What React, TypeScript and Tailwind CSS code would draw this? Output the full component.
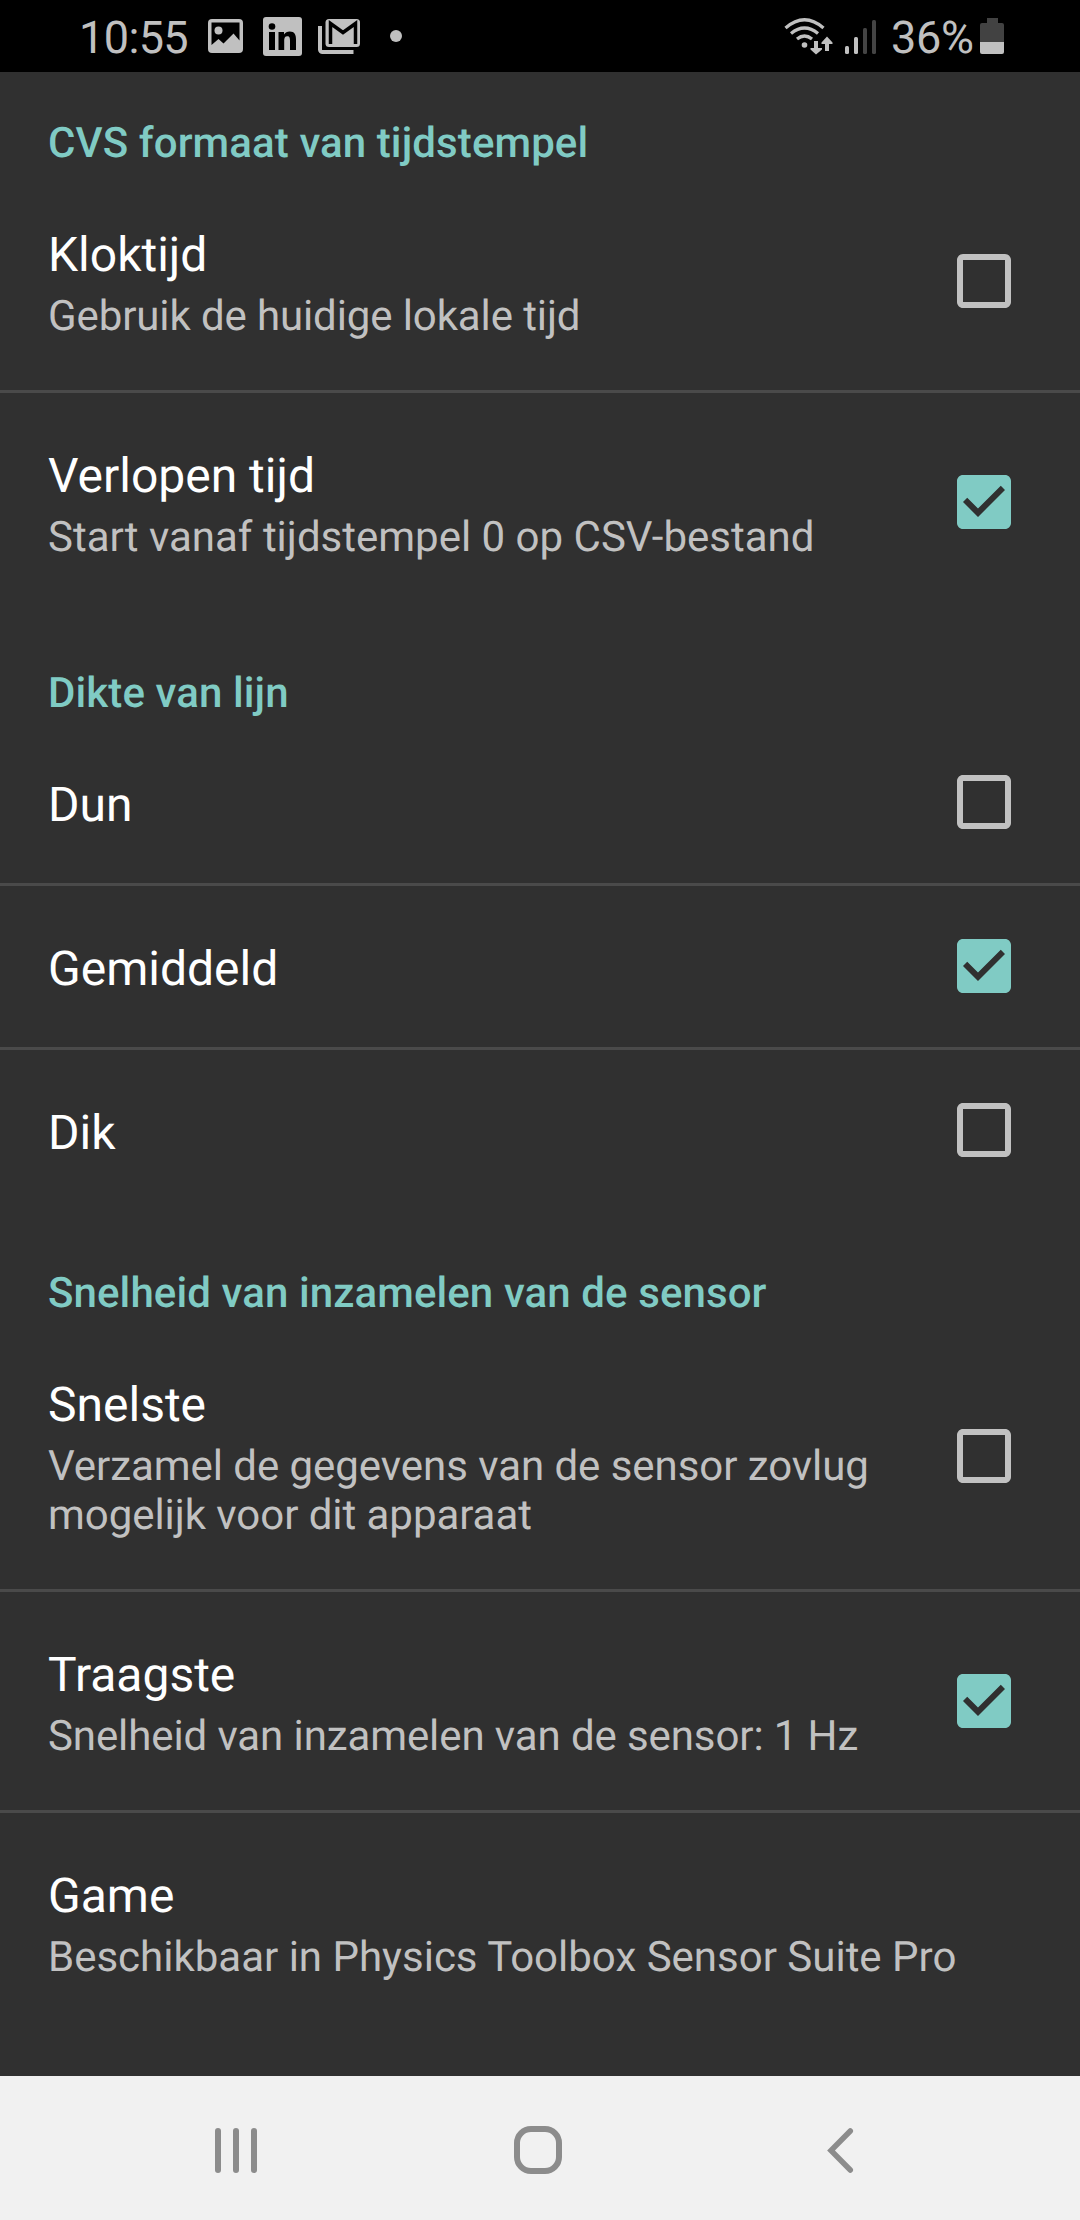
import React from "react";

function CheckBox({ checked }: { checked: boolean }) {
  return (
    <svg viewBox="0 0 24 24" className={checked ? "size-[72px] shrink-0 text-[#80cbc4]" : "size-[72px] shrink-0 text-[#c1c1c1]"} fill="currentColor">
      {checked ? (
        <path d="M19 3H5c-1.11 0-2 .9-2 2v14c0 1.1.89 2 2 2h14c1.11 0 2-.9 2-2V5c0-1.1-.89-2-2-2zm-9 14l-5-5 1.41-1.41L10 14.17l7.59-7.59L19 8l-9 9z" />
      ) : (
        <path d="M19 5v14H5V5h14m0-2H5c-1.1 0-2 .9-2 2v14c0 1.1.9 2 2 2h14c1.1 0 2-.9 2-2V5c0-1.1-.9-2-2-2z" />
      )}
    </svg>
  );
}

type Item = { title: string; summary?: string; checked?: boolean; tracking?: string };

function Row({ item, divider }: { item: Item; divider: boolean }) {
  return (
    <>
      <div
        className={
          item.summary
            ? "flex items-center justify-between pl-12 pr-[60px]"
            : "flex h-[161px] items-center justify-between pl-12 pr-[60px] pb-px"
        }
      >
        <div className={item.summary ? "flex min-w-0 flex-col gap-[9px] pt-[55px] pb-[49px]" : "pt-[6px]"}>
          <div className="text-[48px] leading-[56px] text-white">{item.title}</div>
          {item.summary && (
            <div className={`whitespace-pre-line text-[42px] leading-[49px] text-[#c1c1c1] ${item.tracking ?? ""}`}>
              {item.summary}
            </div>
          )}
        </div>
        {item.checked !== undefined && <CheckBox checked={item.checked} />}
      </div>
      {divider && <div className="h-[3px] bg-[#4a4a4a]" />}
    </>
  );
}

const sections: { heading: string; items: Item[] }[] = [
  {
    heading: "CVS formaat van tijdstempel",
    items: [
      { title: "Kloktijd", summary: "Gebruik de huidige lokale tijd", checked: false, tracking: "tracking-[-0.11px]" },
      { title: "Verlopen tijd", summary: "Start vanaf tijdstempel 0 op CSV-bestand", checked: true },
    ],
  },
  {
    heading: "Dikte van lijn",
    items: [
      { title: "Dun", checked: false },
      { title: "Gemiddeld", checked: true },
      { title: "Dik", checked: false },
    ],
  },
  {
    heading: "Snelheid van inzamelen van de sensor",
    items: [
      {
        title: "Snelste",
        summary: "Verzamel de gegevens van de sensor zovlug\nmogelijk voor dit apparaat",
        checked: false,
        tracking: "tracking-[-0.05px]",
      },
      { title: "Traagste", summary: "Snelheid van inzamelen van de sensor: 1 Hz", checked: true, tracking: "tracking-[-0.1px]" },
      { title: "Game", summary: "Beschikbaar in Physics Toolbox Sensor Suite Pro" },
    ],
  },
];

function StatusBar() {
  return (
    <div className="flex h-[72px] shrink-0 items-center bg-black text-[#c0c0c0]">
      <div className="ml-[79px] w-[129px] whitespace-nowrap pt-[3px] text-[45px] leading-[69px] tracking-[-0.6px]">10:55</div>
      {/* picture */}
      <svg className="h-[34px] w-[35px]" viewBox="0 0 35 34">
        <rect width="35" height="34" rx="4" fill="currentColor" />
        <path d="M3.500 3.500h28v18l-6-7-10 10-5-4.500-7 6z" fill="#000" />
        <circle cx="10.500" cy="11.500" r="4" fill="currentColor" />
      </svg>
      {/* linkedin */}
      <svg className="ml-5 h-[39px] w-[39px]" viewBox="0 0 39 39">
        <rect width="39" height="39" rx="3" fill="currentColor" />
        <circle cx="9" cy="9.500" r="3.300" fill="#000" />
        <path d="M6 15h6v18H6zM15.500 15h5.500v2.500c1.200-2 3.200-3 5.700-3 5 0 6.300 3.500 6.300 8V33h-6v-9.300c0-2.400-.3-4.500-2.700-4.500-2.500 0-3.100 2-3.100 4.300V33h-5.700z" fill="#000" />
      </svg>
      {/* mail stack */}
      <svg className="ml-4 h-[35px] w-[42px]" viewBox="0 0 42 35">
        <path d="M2 7v23.500a2.500 2.500 0 0 0 2.500 2.500H35.500" fill="none" stroke="currentColor" strokeWidth="4" />
        <rect x="7.500" y="0" width="34.500" height="28" rx="3.500" fill="currentColor" />
        <path d="M12.500 25V4.500L25 13.500l12.500-9V25" fill="none" stroke="#000" strokeWidth="3.500" />
      </svg>
      <div className="ml-[30px] size-3 rounded-full bg-[#c0c0c0]" />
      <div className="grow" />
      {/* wifi with traffic arrows */}
      <svg className="h-[37px] w-[49px]" viewBox="0 0 49 37">
        <g fill="none" stroke="currentColor" strokeWidth="3.300">
          <path d="M1.500 10Q20.500-6.500 39.500 10" />
          <path d="M7 15.500Q20.500 4.500 34 15.500" />
          <path d="M13 21Q20.500 15 28 21" />
        </g>
        <circle cx="20.500" cy="27" r="2.800" fill="currentColor" />
        <path d="M30 23h4v7h4v1.500l-6 5-5.500-5V30H30zM41 33v-7h-3.500v-1.500l5.500-6 5.500 6V26H45v7z" fill="currentColor" />
      </svg>
      {/* mobile signal */}
      <svg className="mt-0.5 ml-3 h-[34px] w-[31px]" viewBox="0 0 31 34">
        <rect x="0" y="26" width="4" height="8" rx="1.500" fill="currentColor" />
        <rect x="9" y="17" width="4" height="17" rx="1.500" fill="currentColor" />
        <rect x="18" y="8" width="4" height="26" rx="1.500" fill="#444" />
        <rect x="27" y="0" width="4" height="34" rx="1.500" fill="#444" />
      </svg>
      <div className="ml-[15px] w-[86px] whitespace-nowrap pt-[3px] text-[45px] leading-[69px] tracking-[-0.3px]">36%</div>
      <svg className="ml-[3px] mr-[76px] h-9 w-6" viewBox="0 0 24 36">
        <path d="M7 0h11v5h4a2 2 0 0 1 2 2v17H0V7a2 2 0 0 1 2-2h5z" fill="#424242" />
        <path d="M0 24h24v10a2 2 0 0 1-2 2H2a2 2 0 0 1-2-2z" fill="currentColor" />
      </svg>
    </div>
  );
}

function NavBar() {
  return (
    <div className="flex h-36 shrink-0 items-center bg-[#f1f1f1] pt-1 text-[#8c8c8c]">
      <svg className="ml-[215px] h-[45px] w-[43px]" viewBox="0 0 43 45" fill="currentColor">
        <rect x="0" width="6" height="45" rx="3" />
        <rect x="18" width="6" height="45" rx="3" />
        <rect x="36" width="6" height="45" rx="3" />
      </svg>
      <svg className="ml-64 size-12" viewBox="0 0 48 48" fill="none" stroke="currentColor" strokeWidth="6">
        <rect x="3" y="3" width="42" height="42" rx="14" />
      </svg>
      <svg className="ml-[265px] h-[45px] w-[27px]" viewBox="0 0 27 45" fill="none" stroke="currentColor" strokeWidth="5.500" strokeLinecap="round">
        <path d="M23.300 3L4 22.500l19.300 19.500" />
      </svg>
    </div>
  );
}

export default function App() {
  return (
    <div className="flex h-[2220px] w-[1080px] flex-col overflow-hidden bg-[#303030] font-[Roboto,sans-serif] [text-rendering:geometricPrecision]">
      <StatusBar />
      <main className="flex grow flex-col">
        {sections.map((section, s) => (
          <section key={section.heading}>
            <h2
              className={
                s === 0
                  ? "pt-[47px] pb-1 pl-12 text-[42px] leading-[49px] font-medium tracking-[0.1px] text-[#80cbc4]"
                  : "pt-[58px] pb-1 pl-12 text-[42px] leading-[49px] font-medium tracking-[0.1px] text-[#80cbc4]"
              }
            >
              {section.heading}
            </h2>
            {section.items.map((item, i) => (
              <Row key={item.title} item={item} divider={i < section.items.length - 1} />
            ))}
          </section>
        ))}
      </main>
      <NavBar />
    </div>
  );
}
